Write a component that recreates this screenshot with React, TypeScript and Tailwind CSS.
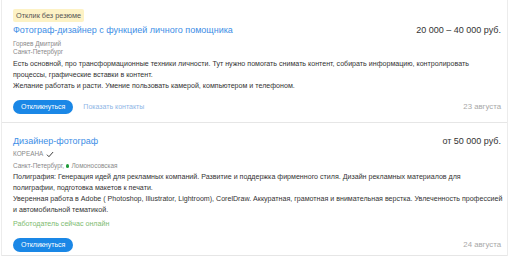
import React from "react";

function Check() {
  return (
    <svg width="8" height="7" viewBox="0 0 9 8" className="ml-[3px]">
      <path d="M1 4.2 L3.3 6.5 L8 1.2" fill="none" stroke="#333" strokeWidth="1.1" />
    </svg>
  );
}

export default function App() {
  return (
    <div className="w-[512px] h-[264px] bg-white text-[#333] text-[8px] leading-[10px]" style={{ fontFamily: '"Liberation Sans", Arial, sans-serif' }}>
      <div className="w-[507px] ml-[1px] border-l border-r border-[#ececec]">
        <div className="pl-[11px] pr-[6px] pt-[9px] pb-[8px] border-b border-[#e6e6e6]">
          <div className="flex">
            <div className="bg-[#fdf2c5] text-[#555] text-[7.3px] leading-[13px] px-[3px] rounded-[2px]">Отклик без резюме</div>
          </div>
          <div className="flex justify-between items-baseline mt-[2px]">
            <div className="text-[#3d8ee6] text-[9px] leading-[12px]">Фотограф-дизайнер с функцией личного помощника</div>
            <div className="text-[9px] leading-[12px] text-[#333]">20 000 – 40 000 руб.</div>
          </div>
          <div className="text-[6.4px] leading-[8px] text-[#8a8a8a] mt-[4px]">Горяев Дмитрий</div>
          <div className="text-[6.4px] leading-[8px] text-[#8a8a8a]">Санкт-Петербург</div>
          <div className="text-[7.1px] leading-[11px] text-[#333] mt-[3px] whitespace-nowrap">
            <div>Есть основной, про трансформационные техники личности. Тут нужно помогать снимать контент, собирать информацию, контролировать</div>
            <div>процессы, графические вставки в контент.</div>
            <div>Желание работать и расти. Умение пользовать камерой, компьютером и телефоном.</div>
          </div>
          <div className="flex items-center justify-between mt-[8px]">
            <div className="flex items-center">
              <div className="bg-[#1a87e6] text-white text-[7px] leading-[14px] px-[8px] rounded-full">Откликнуться</div>
              <div className="text-[#8fb6e6] text-[7px] ml-[10px]">Показать контакты</div>
            </div>
            <div className="text-[#a8a8a8] text-[7.8px]">23 августа</div>
          </div>
        </div>
        <div className="pl-[11px] pr-[6px] pt-[12px] pb-[3px] border-b border-[#e6e6e6]">
          <div className="flex justify-between items-baseline">
            <div className="text-[#3d8ee6] text-[9px] leading-[12px]">Дизайнер-фотограф</div>
            <div className="text-[9px] leading-[12px] text-[#333]">от 50 000 руб.</div>
          </div>
          <div className="flex items-center text-[6.4px] leading-[8px] text-[#8a8a8a] mt-[3px]">КОРЕАНА<Check /></div>
          <div className="flex items-center text-[6.4px] leading-[8px] text-[#8a8a8a] mt-[4px]">
            Санкт-Петербург,&nbsp;<span className="inline-block w-[3.5px] h-[3.5px] rounded-full bg-[#1f9a3a] mr-[2px]"></span>Ломоносовская
          </div>
          <div className="text-[7.1px] leading-[11px] text-[#333] mt-[2px] whitespace-nowrap">
            <div>Полиграфия: Генерация идей для рекламных компаний. Развитие и поддержка фирменного стиля. Дизайн рекламных материалов для</div>
            <div>полиграфии, подготовка макетов к печати.</div>
            <div>Уверенная работа в Adobe ( Photoshop, Illustrator, Lightroom), CorelDraw. Аккуратная, грамотная и внимательная верстка. Увлеченность профессией</div>
            <div>и автомобильной тематикой.</div>
          </div>
          <div className="text-[7.1px] leading-[10px] text-[#7dbb6f] mt-[3px]">Работодатель сейчас онлайн</div>
          <div className="flex items-center justify-between mt-[9px]">
            <div className="bg-[#1a87e6] text-white text-[7px] leading-[14px] px-[8px] rounded-full">Откликнуться</div>
            <div className="text-[#a8a8a8] text-[7.8px]">24 августа</div>
          </div>
        </div>
      </div>
    </div>
  );
}
